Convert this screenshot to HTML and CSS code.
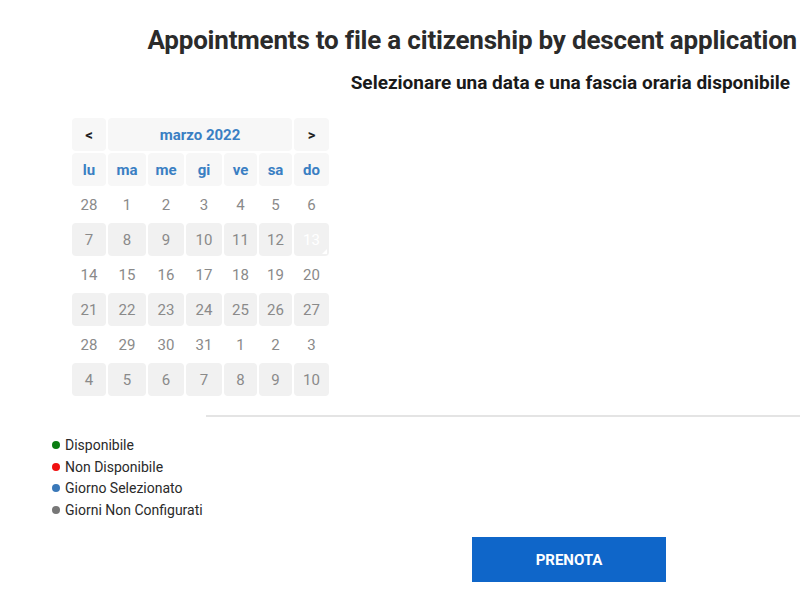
FILE: index.html
```html
<!DOCTYPE html>
<html lang="it">

<head>
    <meta charset="UTF-8">
    <title>Prenota</title>
    <link rel="stylesheet" href="styles.css">
</head>

<body>
    <div class="page">
        <h1 class="title">Appointments to file a citizenship by descent application</h1>
        <h2 class="subtitle">Selezionare una data e una fascia oraria disponibile</h2>

        <div class="calendar">
            <table class="cal">
                <colgroup>
                    <col style="width: 34px">
                    <col style="width: 38px">
                    <col style="width: 36px">
                    <col style="width: 36px">
                    <col style="width: 33px">
                    <col style="width: 33px">
                    <col style="width: 35px">
                </colgroup>
                <thead>
                    <tr class="nav">
                        <th class="arrow">&lt;</th>
                        <th class="month" colspan="5">marzo 2022</th>
                        <th class="arrow">&gt;</th>
                    </tr>
                    <tr class="days">
                        <th>lu</th><th>ma</th><th>me</th><th>gi</th><th>ve</th><th>sa</th><th>do</th>
                    </tr>
                </thead>
                <tbody>
                    <tr><td>28</td><td>1</td><td>2</td><td>3</td><td>4</td><td>5</td><td>6</td></tr>
                    <tr class="grey"><td>7</td><td>8</td><td>9</td><td>10</td><td>11</td><td>12</td><td class="today">13</td></tr>
                    <tr><td>14</td><td>15</td><td>16</td><td>17</td><td>18</td><td>19</td><td>20</td></tr>
                    <tr class="grey"><td>21</td><td>22</td><td>23</td><td>24</td><td>25</td><td>26</td><td>27</td></tr>
                    <tr><td>28</td><td>29</td><td>30</td><td>31</td><td>1</td><td>2</td><td>3</td></tr>
                    <tr class="grey"><td>4</td><td>5</td><td>6</td><td>7</td><td>8</td><td>9</td><td>10</td></tr>
                </tbody>
            </table>
        </div>

        <div class="line"></div>

        <ul class="legend">
            <li><span class="dot green"></span>Disponibile</li>
            <li><span class="dot red"></span>Non Disponibile</li>
            <li><span class="dot blue"></span>Giorno Selezionato</li>
            <li><span class="dot gray"></span>Giorni Non Configurati</li>
        </ul>

        <div class="actions">
            <button class="btn">PRENOTA</button>
        </div>
    </div>
</body>

</html>
```

FILE: styles.css
```css
body,
ul,
li,
h1,
h2,
table {
    margin: 0;
    padding: 0;
    list-style: none;
}

body {
    font-family: Roboto, "Open Sans", sans-serif;
    color: #333;
    background: #fff;
}

.page {
    width: 800px;
    overflow: hidden;
}

.title {
    text-align: right;
    font-size: 26px;
    line-height: 30px;
    font-weight: bold;
    color: #2b2b2b;
    padding: 25px 3px 0 0;
    white-space: nowrap;
    letter-spacing: -0.2px;
}

.subtitle {
    text-align: right;
    font-size: 19px;
    line-height: 22px;
    font-weight: bold;
    color: #1a1a1a;
    padding: 17px 10px 0 0;
}

.calendar {
    padding: 22px 0 0 70px;
}

.cal {
    border-collapse: separate;
    border-spacing: 2px;
    table-layout: fixed;
    width: 261px;
}

.cal th,
.cal td {
    height: 33px;
    padding: 0;
    text-align: center;
    border-radius: 4px;
    font-size: 15px;
}

.cal th {
    background: #f7f7f7;
    color: #3a7fc3;
    font-weight: bold;
}

.cal .arrow {
    color: #222;
}

.cal td {
    color: #8a8a8a;
}

.cal .grey td {
    background: #f1f1f1;
}

.cal td.today {
    color: #fff;
    position: relative;
}

.cal td.today::after {
    content: "";
    position: absolute;
    right: 2px;
    bottom: 2px;
    border-left: 5px solid transparent;
    border-bottom: 5px solid #fff;
}

.line {
    margin: 17px 0 0 206px;
    height: 2px;
    background: #e4e4e4;
}

.legend {
    padding: 18px 0 0 52px;
}

.legend li {
    font-size: 14px;
    line-height: 21.5px;
    color: #2a2a2a;
}

.dot {
    display: inline-block;
    width: 8px;
    height: 8px;
    border-radius: 50%;
    margin-right: 5px;
    vertical-align: 1px;
}

.green {
    background: #0a7d12;
}

.red {
    background: #f01010;
}

.blue {
    background: #3a78b8;
}

.gray {
    background: #777;
}

.actions {
    padding: 16px 0 0 472px;
}

.btn {
    width: 194px;
    height: 45px;
    border: 0;
    background: #0f66c9;
    color: #fff;
    font-family: Roboto, "Open Sans", sans-serif;
    font-weight: bold;
    font-size: 15px;
}
```
